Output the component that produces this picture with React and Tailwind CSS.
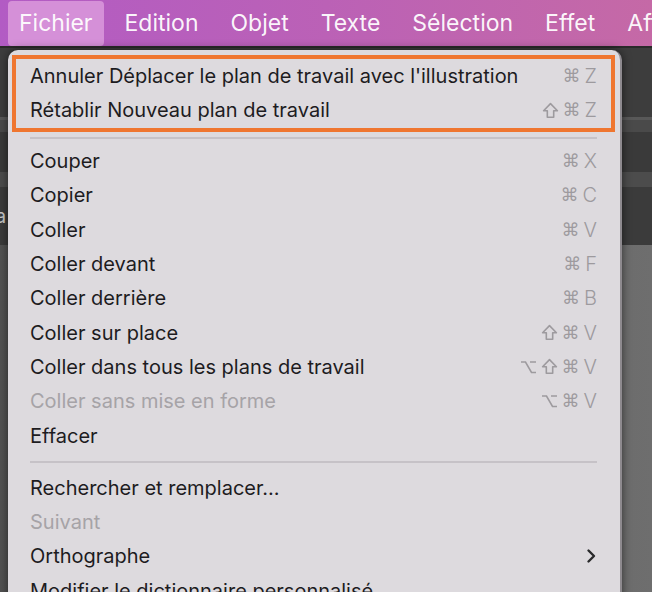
import React from "react";

const menuBar = ["Fichier", "Edition", "Objet", "Texte", "Sélection", "Effet", "Affichage"];

const items = [
  { label: "Couper", keys: ["cmd", "X"] },
  { label: "Copier", keys: ["cmd", "C"] },
  { label: "Coller", keys: ["cmd", "V"] },
  { label: "Coller devant", keys: ["cmd", "F"] },
  { label: "Coller derrière", keys: ["cmd", "B"] },
  { label: "Coller sur place", keys: ["shift", "cmd", "V"] },
  { label: "Coller dans tous les plans de travail", keys: ["opt", "shift", "cmd", "V"] },
  { label: "Coller sans mise en forme", keys: ["opt", "cmd", "V"], disabled: true },
  { label: "Effacer", keys: [] },
];

const items2 = [
  { label: "Rechercher et remplacer...", keys: [] },
  { label: "Suivant", keys: [], disabled: true },
  { label: "Orthographe", keys: [], submenu: true },
  { label: "Modifier le dictionnaire personnalisé", keys: [] },
];

function KeyGlyph({ k }) {
  if (k === "shift") {
    return (
      <svg width="17" height="17" viewBox="0 0 16 16">
        <path d="M8 1.5 L14.5 8.2 H11 V14.3 H5 V8.2 H1.5 Z" fill="none" stroke="currentColor" strokeWidth="1.5" strokeLinejoin="round" />
      </svg>
    );
  }
  if (k === "opt") {
    return (
      <svg width="17" height="16" viewBox="0 0 17 16">
        <path d="M1 3 H5.5 L11.5 13.5 H16 M10 3 H16" fill="none" stroke="currentColor" strokeWidth="1.6" />
      </svg>
    );
  }
  if (k === "cmd") {
    return <span className="text-[18px] leading-none font-['DejaVu_Sans',sans-serif]">⌘</span>;
  }
  return <span className="text-[20px] leading-none font-['Inter',sans-serif] font-light">{k}</span>;
}

function Keys({ keys }) {
  return (
    <span className="flex items-center gap-[4px] text-[#9d9a9e]">
      {keys.map((k, i) => (
        <KeyGlyph key={i} k={k} />
      ))}
    </span>
  );
}

function Row({ item, inner }) {
  return (
    <div
      className={`h-[34.3px] flex items-center justify-between ${inner ? "px-[14px]" : "px-[18px]"} ${
        item.disabled ? "text-[#a6a3a7]" : "text-[#1d1c1f]"
      }`}
    >
      <span className="text-[20px] leading-none whitespace-nowrap">{item.label}</span>
      {item.submenu ? (
        <svg width="10" height="16" viewBox="0 0 10 16" className="mr-[1px]">
          <path d="M2.5 2.5 L8 8 L2.5 13.5" fill="none" stroke="#2a2a2c" strokeWidth="2.4" strokeLinecap="round" strokeLinejoin="round" />
        </svg>
      ) : (
        <Keys keys={item.keys} />
      )}
    </div>
  );
}

function Separator({ h }) {
  return (
    <div className={`${h} flex items-center px-[18px]`}>
      <div className="h-[2px] w-full bg-[#c6c2c7]" />
    </div>
  );
}

export default function App() {
  return (
    <div className="relative w-[652px] h-[592px] overflow-hidden bg-[#3c3c3c] font-['Inter',sans-serif]">
      {/* Menu bar */}
      <div className="h-[48px] flex items-start gap-[10px] pl-[8px] pt-[1px] bg-gradient-to-r from-[#b25bc4] via-[#bb61b6] to-[#c569a6] border-b-2 border-[#2a2a2a] whitespace-nowrap">
        {menuBar.map((m, i) => (
          <div
            key={m}
            className={`h-[45px] flex items-center px-[11px] rounded-[4px] text-[23px] text-white/95 ${
              i === 0 ? "bg-[#d590d8]" : ""
            }`}
          >
            {m}
          </div>
        ))}
      </div>

      {/* Background panels */}
      <div className="flex flex-col">
        <div className="h-[69px] bg-[#3d3d3d]" />
        <div className="h-[3px] bg-[#585858]" />
        <div className="h-[12px] bg-[#4a4a4a]" />
        <div className="h-[40px] bg-[#3a3a3a]" />
        <div className="h-[15px] bg-[#4c4c4c]" />
        <div className="h-[58px] bg-[#3b3b3b] flex items-center">
          <span className="-ml-[5px] text-[20px] text-[#c8c8c8]">a</span>
        </div>
        <div className="h-[400px] bg-gradient-to-r from-[#525252] to-[#6e6e6e]" />
      </div>

      {/* Dropdown */}
      <div className="absolute left-[8px] top-[50px] w-[614px] h-[560px] bg-[#dddade] rounded-t-[10px] border-r-2 border-[#8e8a8f] shadow-[0_0_10px_rgba(0,0,0,0.55)] pl-[4px] pr-[5px] pt-[5px]">
        <div className="border-[4px] border-[#ef7630]">
          <Row inner item={{ label: "Annuler Déplacer le plan de travail avec l'illustration", keys: ["cmd", "Z"] }} />
          <Row inner item={{ label: "Rétablir Nouveau plan de travail", keys: ["shift", "cmd", "Z"] }} />
        </div>
        <Separator h="h-[12.4px]" />
        {items.map((it) => (
          <Row key={it.label} item={it} />
        ))}
        <Separator h="h-[18px]" />
        {items2.map((it) => (
          <Row key={it.label} item={it} />
        ))}
      </div>
    </div>
  );
}
